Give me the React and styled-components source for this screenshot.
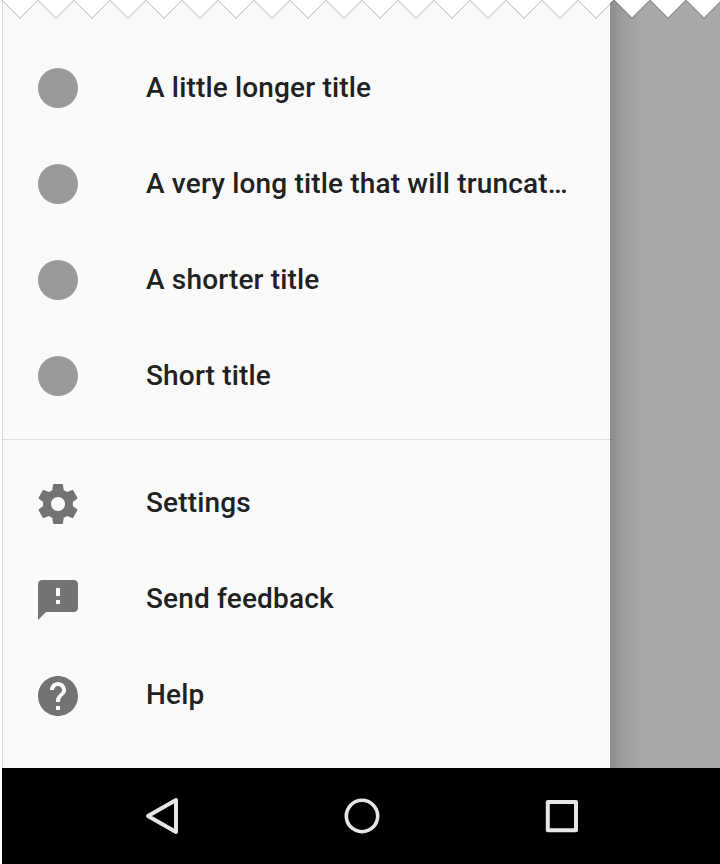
import React from 'react';
import styled, { createGlobalStyle } from 'styled-components';

const GlobalStyle = createGlobalStyle`
  *, *::before, *::after { box-sizing: border-box; }
  body { margin: 0; background: #fff; font-family: Roboto, "Liberation Sans", sans-serif; }
`;

const Screen = styled.div`
  position: relative;
  display: flex;
  flex-direction: column;
  width: 720px;
  height: 864px;
  padding-left: 2px;
  overflow: hidden;
`;

const Content = styled.main`
  display: flex;
  height: 768px;
`;

const Drawer = styled.aside`
  width: 608px;
  padding-top: 40px;
  background: #fafafa;
  border-left: 1px solid #dcdcdc;
`;

const Scrim = styled.div`
  flex: 1;
  background: linear-gradient(90deg, #8d8d8d 0, #949494 6px, #9c9c9c 13px, #a3a3a3 22px, #a7a7a7 31px, #a9a9a9 42px);
`;

const List = styled.ul`
  margin: 0;
  padding: 0;
  list-style: none;
`;

const Item = styled.li`
  display: flex;
  align-items: center;
  height: 96px;
  padding: 0 32px 0 31px;
`;

const IconSlot = styled.span`
  display: flex;
  flex: none;
  width: 112px;
  color: #737373;
`;

const Dot = styled.span`
  width: 40px;
  height: 40px;
  margin-left: 4px;
  border-radius: 50%;
  background: #999;
`;

const Label = styled.span`
  color: #212121;
  font-size: 28px;
  font-weight: 500;
  line-height: 36px;
  letter-spacing: 0.16px;
  white-space: nowrap;
  margin-top: ${(p) => p.$lift}px;
`;

const Divider = styled.hr`
  position: relative;
  width: 611px;
  height: 1px;
  margin: 15px 0 16px -1px;
  border: 0;
  background: rgba(0, 0, 0, 0.1);
`;

const NavBar = styled.nav`
  display: flex;
  align-items: center;
  justify-content: center;
  gap: 152px;
  height: 96px;
  padding-left: 2px;
  background: #000;
`;

const TornEdge = styled.svg`
  position: absolute;
  top: 0;
  left: 0;
  display: block;
`;

const icons = {
  settings:
    'M19.43 12.98c.04-.32.07-.64.07-.98s-.03-.66-.07-.98l2.11-1.65c.19-.15.24-.42.12-.64l-2-3.46c-.12-.22-.39-.3-.61-.22l-2.49 1c-.52-.4-1.08-.73-1.69-.98l-.38-2.65C14.46 2.18 14.25 2 14 2h-4c-.25 0-.46.18-.49.42l-.38 2.65c-.61.25-1.17.59-1.69.98l-2.49-1c-.23-.09-.49 0-.61.22l-2 3.46c-.13.22-.07.49.12.64l2.11 1.65c-.04.32-.07.65-.07.98s.03.66.07.98l-2.11 1.65c-.19.15-.24.42-.12.64l2 3.46c.12.22.39.3.61.22l2.49-1c.52.4 1.08.73 1.69.98l.38 2.65c.03.24.24.42.49.42h4c.25 0 .46-.18.49-.42l.38-2.65c.61-.25 1.17-.59 1.69-.98l2.49 1c.23.09.49 0 .61-.22l2-3.46c.12-.22.07-.49-.12-.64l-2.11-1.65zM12 15.5c-1.93 0-3.5-1.57-3.5-3.5s1.57-3.5 3.5-3.5 3.5 1.57 3.5 3.5-1.57 3.5-3.5 3.5z',
  feedback:
    'M20 2H4c-1.1 0-1.99.9-1.99 2L2 22l4-4h14c1.1 0 2-.9 2-2V4c0-1.1-.9-2-2-2zm-7 12h-2v-2h2v2zm0-4h-2V6h2v4z',
  help:
    'M12 2C6.48 2 2 6.48 2 12s4.48 10 10 10 10-4.48 10-10S17.52 2 12 2zm1 17h-2v-2h2v2zm2.07-7.75l-.9.92C13.45 12.9 13 13.5 13 15h-2v-.5c0-1.1.45-2.1 1.17-2.83l1.24-1.26c.37-.36.59-.86.59-1.41 0-1.1-.9-2-2-2s-2 .9-2 2H8c0-2.21 1.79-4 4-4s4 1.79 4 4c0 .88-.36 1.68-.93 2.25z',
};

const titles = [
  'A little longer title',
  'A very long title that will truncat…',
  'A shorter title',
  'Short title',
];

const actions = [
  { label: 'Settings', icon: 'settings' },
  { label: 'Send feedback', icon: 'feedback' },
  { label: 'Help', icon: 'help' },
];

const zigzag = Array.from({ length: 41 }, (_, i) => `${2 + i * 18},${i % 2 ? 17.5 : -0.5}`).join(' ');

export default function App() {
  return (
    <>
      <GlobalStyle />
      <Screen>
        <Content>
          <Drawer>
            <List>
              {titles.map((title) => (
                <Item key={title}>
                  <IconSlot><Dot /></IconSlot>
                  <Label $lift={0}>{title}</Label>
                </Item>
              ))}
            </List>
            <Divider />
            <List>
              {actions.map(({ label, icon }) => (
                <Item key={label}>
                  <IconSlot>
                    <svg width="48" height="48" viewBox="0 0 24 24" fill="currentColor">
                      <path d={icons[icon]} />
                    </svg>
                  </IconSlot>
                  <Label $lift={-2}>{label}</Label>
                </Item>
              ))}
            </List>
          </Drawer>
          <Scrim />
        </Content>
        <NavBar>
          <svg width="48" height="48" viewBox="0 0 48 48" fill="none" stroke="#e6e6e6" strokeWidth="4" strokeLinejoin="round">
            <path d="M38 8v32L10 24z" />
          </svg>
          <svg width="48" height="48" viewBox="0 0 48 48" fill="none" stroke="#e6e6e6" strokeWidth="3.6">
            <circle cx="24" cy="24" r="15.7" />
          </svg>
          <svg width="48" height="48" viewBox="0 0 48 48" fill="none" stroke="#e6e6e6" strokeWidth="4" strokeLinejoin="round">
            <path d="M9.8 10h28.2v28.200H9.8z" />
          </svg>
        </NavBar>
        <TornEdge width="720" height="22">
          <polyline points={zigzag} fill="none" stroke="#000" strokeOpacity="0.2" strokeWidth="2" />
          <polygon points={`2,-1 ${zigzag} 722,-1`} fill="#fff" />
        </TornEdge>
      </Screen>
    </>
  );
}
